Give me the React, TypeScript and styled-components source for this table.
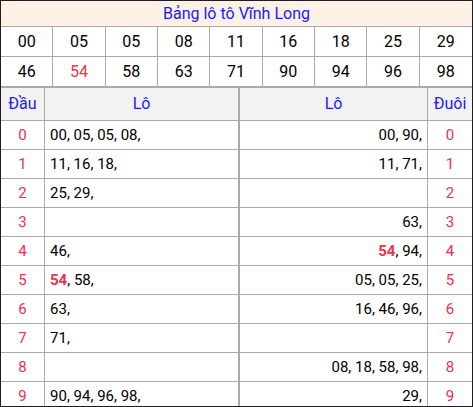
import { JSX } from 'react';
import styled, { createGlobalStyle } from 'styled-components';

const GlobalStyle = createGlobalStyle`
  html, body {
    margin: 0;
    padding: 0;
    background: #fff;
  }
`;

type LotoPart = { value: string; hot?: boolean };

const results = ['00', '05', '05', '08', '11', '16', '18', '25', '29', '46', '54', '58', '63', '71', '90', '94', '96', '98'];
const hotNumber = '54';

function byHead(digit: number): LotoPart[] {
  return results.filter((n) => Number(n[0]) === digit).map((n) => ({ value: n, hot: n === hotNumber }));
}

function byTail(digit: number): LotoPart[] {
  return results.filter((n) => Number(n[1]) === digit).map((n) => ({ value: n, hot: n === hotNumber }));
}

function LotoList({ parts }: { parts: LotoPart[] }): JSX.Element {
  return (
    <>
      {parts.map((p, i) => (
        <span key={i}>
          {p.hot ? <Hot>{p.value}</Hot> : p.value},{i < parts.length - 1 ? ' ' : ''}
        </span>
      ))}
    </>
  );
}

export default function App(): JSX.Element {
  const digits = [0, 1, 2, 3, 4, 5, 6, 7, 8, 9];

  return (
    <Frame>
      <GlobalStyle />
      <ResultTable>
        <Title>Bảng lô tô Vĩnh Long</Title>
        {results.map((n, i) => (
          <NumberCell key={i} $last={(i + 1) % 9 === 0} $hot={n === hotNumber}>
            {n}
          </NumberCell>
        ))}
      </ResultTable>

      <Split>
        <Panel $side="left">
          <HeadCell $width={43}>Đầu</HeadCell>
          <HeadCell $last>Lô</HeadCell>
          {digits.map((d) => (
            <Row key={d}>
              <DigitCell $width={43}>{d}</DigitCell>
              <LotoCell $align="left">
                <LotoList parts={byHead(d)} />
              </LotoCell>
            </Row>
          ))}
        </Panel>
        <Panel $side="right">
          <HeadCell>Lô</HeadCell>
          <HeadCell $width={44} $last>Đuôi</HeadCell>
          {digits.map((d) => (
            <Row key={d}>
              <LotoCell $align="right">
                <LotoList parts={byTail(d)} />
              </LotoCell>
              <DigitCell $width={44} $last>{d}</DigitCell>
            </Row>
          ))}
        </Panel>
      </Split>
    </Frame>
  );
}

const Frame = styled.div`
  width: 473px;
  height: 407px;
  box-sizing: border-box;
  border: 1px solid #1e1e1e;
  overflow: hidden;
  font-family: Roboto, 'Liberation Sans', sans-serif;
  color: #000;
`;

const ResultTable = styled.div`
  display: grid;
  grid-template-columns: repeat(9, 1fr);
  border-bottom: 1px solid #aaa;
`;

const Title = styled.div`
  grid-column: 1 / -1;
  height: 25px;
  line-height: 25px;
  background: #fdf1e6;
  color: #1a1aff;
  font-size: 16px;
  text-align: center;
  border-bottom: 1px solid #aaa;
`;

const NumberCell = styled.div<{ $last?: boolean; $hot?: boolean }>`
  height: 29px;
  line-height: 29px;
  font-size: 16px;
  text-align: center;
  color: ${({ $hot }) => ($hot ? '#f0304a' : '#000')};
  border-right: ${({ $last }) => ($last ? 'none' : '1px solid #aaa')};
  &:nth-child(n + 11) {
    border-top: 1px solid #aaa;
  }
`;

const Split = styled.div`
  display: flex;
  border-top: 1px solid #aaa;
`;

const Panel = styled.div<{ $side: 'left' | 'right' }>`
  width: ${({ $side }) => ($side === 'left' ? '238px' : '233px')};
  box-sizing: border-box;
  display: flex;
  flex-wrap: wrap;
  align-content: flex-start;
  ${({ $side }) => ($side === 'left' ? 'border-right: 1px solid #aaa;' : 'border-left: 1px solid #aaa;')}
`;

const HeadCell = styled.div<{ $width?: number; $last?: boolean }>`
  ${({ $width }) => ($width ? `width: ${$width}px;` : 'flex: 1;')}
  height: 32px;
  line-height: 32px;
  background: #f2f2f2;
  color: #1a1aff;
  font-size: 16px;
  text-align: center;
  border-bottom: 1px solid #aaa;
  ${({ $last }) => ($last ? '' : 'border-right: 1px solid #aaa;')}
`;

const Row = styled.div`
  display: flex;
  width: 100%;
  height: 29px;
  border-bottom: 1px solid #aaa;
  box-sizing: border-box;
`;

const DigitCell = styled.div<{ $width: number; $last?: boolean }>`
  width: ${({ $width }) => $width}px;
  flex-shrink: 0;
  line-height: 28px;
  font-size: 15px;
  color: #f0304a;
  text-align: center;
  ${({ $last }) => ($last ? '' : 'border-right: 1px solid #aaa;')}
`;

const LotoCell = styled.div<{ $align: 'left' | 'right' }>`
  flex: 1;
  line-height: 28px;
  font-size: 15px;
  white-space: nowrap;
  padding: 0 5px;
  text-align: ${({ $align }) => $align};
  ${({ $align }) => ($align === 'right' ? 'border-right: 1px solid #aaa;' : '')}
`;

const Hot = styled.b`
  color: #f0304a;
  font-weight: 700;
`;
